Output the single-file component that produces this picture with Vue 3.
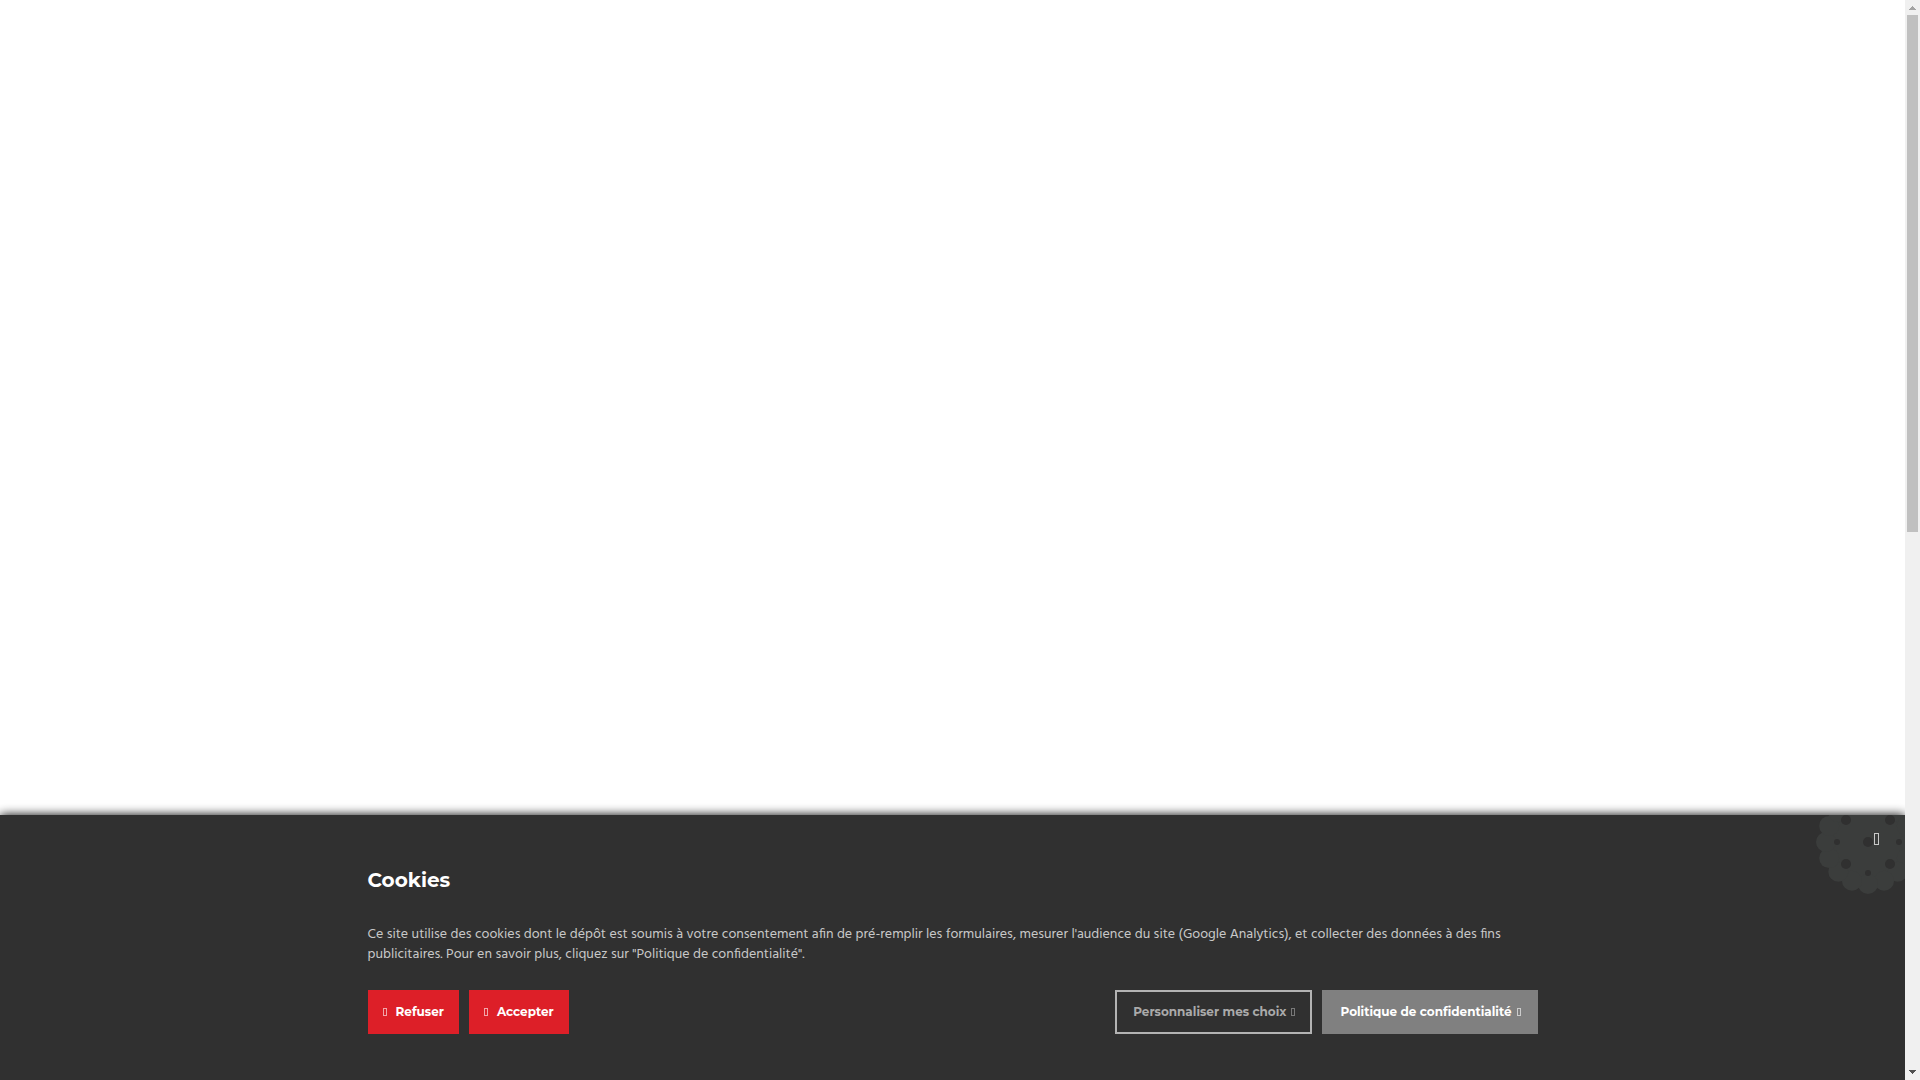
<script setup>
const text = `Ce site utilise des cookies dont le dépôt est soumis à votre consentement afin de pré-remplir les formulaires, mesurer l'audience du site (Google Analytics), et collecter des données à des fins publicitaires. Pour en savoir plus, cliquez sur "Politique de confidentialité".`
const bumps = Array.from({ length: 16 }, (_, i) => {
  const a = (i * Math.PI) / 8
  return { x: 52 + 42 * Math.cos(a), y: 52 + 42 * Math.sin(a) }
})
const chips = [
  [52, 52, 5], [30, 30, 5], [74, 30, 5], [30, 74, 5], [74, 74, 5],
  [21, 52, 3], [83, 52, 3], [52, 21, 3], [52, 83, 3]
]
</script>

<template>
  <div class="page">
    <main class="view">
      <section class="banner" aria-labelledby="cookie-title">
        <svg class="cookie" viewBox="0 0 104 104" aria-hidden="true">
          <g fill="#3b3d3c">
            <circle cx="52" cy="52" r="44" />
            <circle v-for="(b, i) in bumps" :key="i" :cx="b.x" :cy="b.y" r="10" />
          </g>
          <circle v-for="(c, i) in chips" :key="i" :cx="c[0]" :cy="c[1]" :r="c[2]" fill="#303030" />
        </svg>
        <button class="close" type="button" aria-label="Fermer"><i class="glyph large"></i></button>
        <div class="container">
          <h2 id="cookie-title">Cookies</h2>
          <p>{{ text }}</p>
          <div class="actions">
            <div class="group">
              <button class="btn red" type="button"><i class="glyph"></i>Refuser</button>
              <button class="btn red" type="button"><i class="glyph"></i>Accepter</button>
            </div>
            <div class="group">
              <button class="btn outline" type="button">Personnaliser mes choix<i class="glyph"></i></button>
              <a class="btn grey" href="#">Politique de confidentialité<i class="glyph"></i></a>
            </div>
          </div>
        </div>
      </section>
    </main>
    <div class="scrollbar" aria-hidden="true">
      <svg width="15" height="15" viewBox="0 0 15 15" shape-rendering="crispEdges"><path d="M7 6h1v1h1v1h1v1h1v1H4V9h1V8h1V7h1z" fill="#a3a3a3" /></svg>
      <div class="track"><div class="thumb"></div></div>
      <svg width="15" height="15" viewBox="0 0 15 15" shape-rendering="crispEdges"><path d="M4 5h7v1h-1v1H9v1H8v1H7V8H6V7H5V6H4z" fill="#505050" /></svg>
    </div>
  </div>
</template>

<style>
body {
  margin: 0;
  background: #fff;
}
</style>

<style scoped>
.page {
  display: flex;
  height: 100vh;
}
.view {
  flex: 1;
  min-width: 0;
  display: flex;
  flex-direction: column;
  justify-content: flex-end;
  overflow: hidden;
}
.banner {
  position: relative;
  padding: 48px 24px 46px;
  background: #303030;
  box-shadow: 0 0 10px #000;
  color: #c8c8c8;
}
.cookie {
  position: absolute;
  top: -25px;
  right: -15px;
  width: 104px;
  height: 104px;
  clip-path: inset(25px 15px 0 0);
}
.close {
  position: absolute;
  top: 12px;
  right: 17px;
  display: flex;
  align-items: center;
  justify-content: center;
  width: 24px;
  height: 24px;
  padding: 0;
  border: 0;
  background: none;
  color: #c8c8c8;
}
.container {
  max-width: 1170px;
  margin: 0 auto;
}
h2 {
  margin: 0;
  font: 700 20px/34px Montserrat, Inter, sans-serif;
  color: #fff;
}
p {
  margin: 28px 0 25px;
  font: 400 14px/20px Hind, Roboto, sans-serif;
}
.actions,
.group {
  display: flex;
  gap: 10px;
}
.actions {
  justify-content: space-between;
}
.btn {
  display: flex;
  align-items: center;
  box-sizing: border-box;
  height: 44px;
  padding: 0 15px 0 16px;
  border: 0;
  font: 700 12px/20px Montserrat, Inter, sans-serif;
  color: #fff;
  text-decoration: none;
  white-space: nowrap;
}
.red {
  gap: 9px;
  padding: 0 15px;
  background: #dd1f28;
}
.outline {
  gap: 5px;
  border: 2px solid #b3b3b3;
  background: none;
  color: #aaa;
}
.grey {
  gap: 5px;
  padding: 0 17px 0 18px;
  background: #808080;
}
.glyph {
  box-sizing: border-box;
  width: 4px;
  height: 8px;
  border: 1px solid currentColor;
  opacity: 0.6;
}
.glyph.large {
  width: 5px;
  height: 12px;
  opacity: 1;
}
.scrollbar {
  display: flex;
  flex-direction: column;
  width: 15px;
  background: #f0f0f0;
}
.scrollbar svg {
  display: block;
}
.track {
  flex: 1;
}
.thumb {
  height: 49.2%;
  margin: 0 2px;
  background: #c0c0c0;
}
</style>
